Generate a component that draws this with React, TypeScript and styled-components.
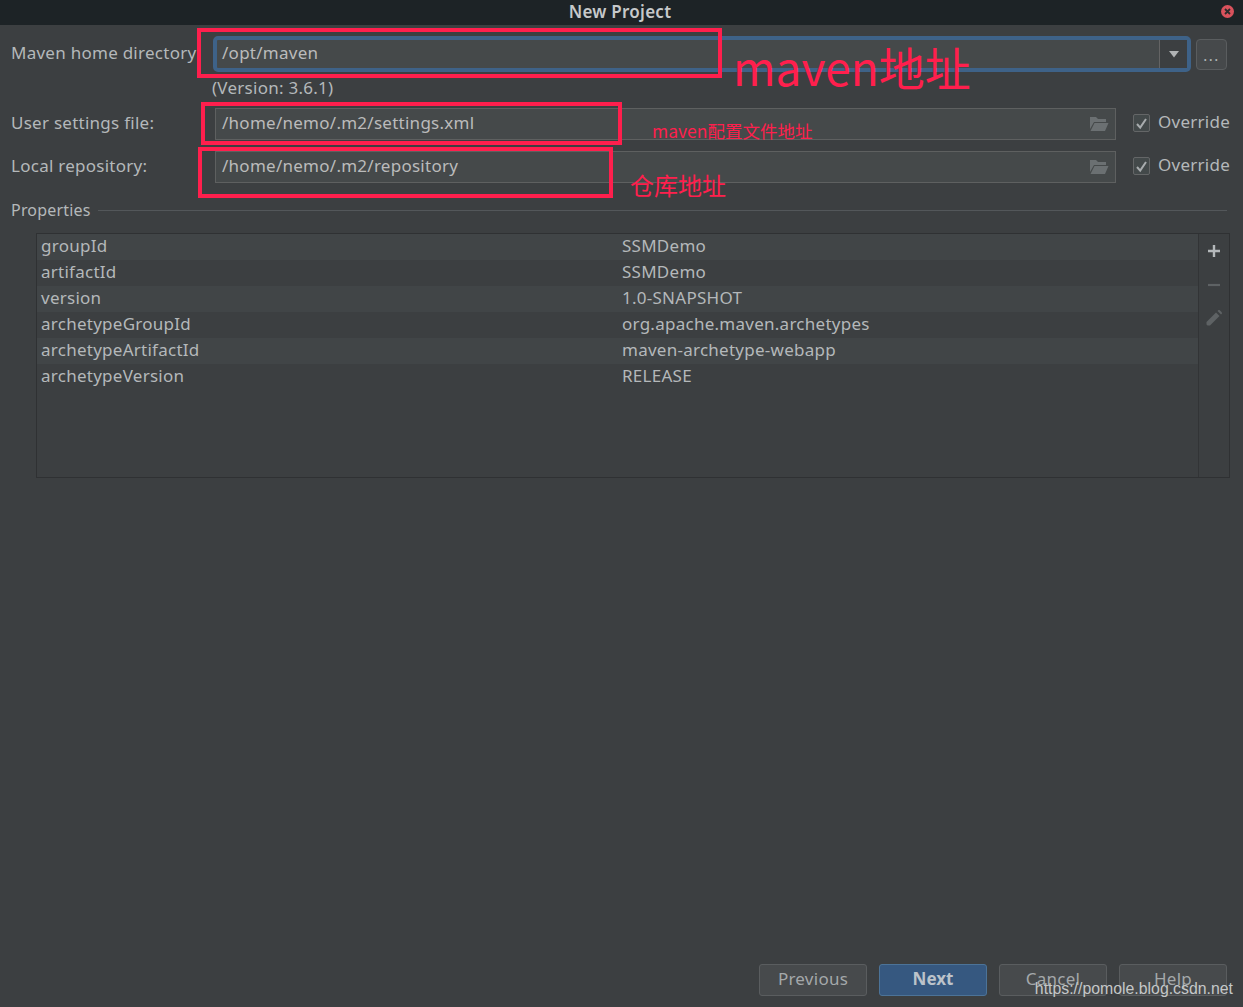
import React from "react";
import styled, { createGlobalStyle } from "styled-components";

const Global = createGlobalStyle`
  html, body { margin: 0; padding: 0; background: #3c3f41; }
  * { box-sizing: border-box; }
`;

const Page = styled.div`
  position: relative;
  width: 1243px;
  height: 1007px;
  overflow: hidden;
  display: flex;
  flex-direction: column;
  background: #3c3f41;
  color: #b4b8ba;
  font-family: "Noto Sans", sans-serif;
  font-size: 17px;
  letter-spacing: 0.26px;
`;

const TitleBar = styled.div`
  height: 25px;
  flex: none;
  position: relative;
  display: flex;
  align-items: center;
  justify-content: center;
  background: #1d2326;
  color: #c6c9ca;
  font-size: 17px;
  font-weight: 600;
  padding: 0 3px 2px 0;
`;

const CloseDot = styled.svg`
  position: absolute;
  right: 8px;
  top: 4px;
`;

const Form = styled.div`
  padding: 11px 13px 0 11px;
  display: flex;
  flex-direction: column;
`;

const Row = styled.div<{ $mt?: number }>`
  display: flex;
  align-items: center;
  margin-top: ${(p) => p.$mt ?? 0}px;
`;

const Label = styled.div<{ $w: number }>`
  width: ${(p) => p.$w}px;
  flex: none;
  white-space: nowrap;
  padding-bottom: 4px;
`;

const Combo = styled.div`
  width: 978px;
  height: 36px;
  flex: none;
  display: flex;
  background: #45494a;
  border: 4px solid #3e6288;
  border-radius: 5px;
`;

const ComboText = styled.div`
  flex: 1;
  padding-left: 5px;
  color: #bbbbbb;
  line-height: 26px;
`;

const ComboArrow = styled.div`
  width: 28px;
  display: flex;
  align-items: center;
  justify-content: center;
  background: #3c3f41;
  border-left: 1px solid #646464;
`;

const MoreButton = styled.div`
  width: 31px;
  height: 31px;
  flex: none;
  margin-left: 5px;
  display: flex;
  align-items: center;
  justify-content: center;
  background: #46494b;
  border: 1px solid #5a5d5f;
  border-radius: 4px;
  color: #b4b8ba;
  font-size: 15px;
  letter-spacing: 1.4px;
  padding-top: 2px;
`;

const Version = styled.div`
  margin: 6px 0 0 201px;
  line-height: 20px;
  height: 20px;
  color: #b4b8ba;
`;

const Field = styled.div`
  width: 901px;
  height: 32px;
  flex: none;
  display: flex;
  align-items: center;
  justify-content: space-between;
  padding: 0 6px;
  background: #45494a;
  border: 1px solid #5e6060;
  color: #bbbbbb;
`;

const FieldText = styled.span`
  padding-bottom: 4px;
`;

const CheckWrap = styled.label`
  display: flex;
  align-items: center;
  margin-left: 17px;
  gap: 8px;
  white-space: nowrap;
`;

const CheckLabel = styled.span`
  padding-bottom: 6px;
`;

const CheckBox = styled.span`
  width: 17px;
  height: 18px;
  margin-bottom: 2px;
  display: flex;
  align-items: center;
  justify-content: center;
  background: #43494a;
  border: 1px solid #646667;
  border-radius: 2px;
`;

const GroupHead = styled.div`
  display: flex;
  align-items: center;
  gap: 7px;
  margin-top: 16px;
  height: 22px;
  font-size: 16px;
  letter-spacing: 0.2px;
`;

const GroupLine = styled.div`
  flex: 1;
  height: 1px;
  background: #53575a;
  margin-right: 3px;
`;

const Table = styled.div`
  margin: 12px 0 0 25px;
  width: 1194px;
  height: 245px;
  flex: none;
  display: flex;
  border: 1px solid #2f3133;
`;

const TableBody = styled.div`
  flex: 1;
  display: flex;
  flex-direction: column;
`;

const TableRow = styled.div<{ $alt: boolean }>`
  height: 26px;
  flex: none;
  display: grid;
  grid-template-columns: 581px 1fr;
  align-items: center;
  padding: 0 0 3px 4px;
  background: ${(p) => (p.$alt ? "#414547" : "#3c3f41")};
`;

const ToolStrip = styled.div`
  width: 31px;
  flex: none;
  border-left: 1px solid #323436;
  display: flex;
  flex-direction: column;
  align-items: center;
  padding-top: 10px;
`;

const ToolIcon = styled.svg<{ $mt?: number }>`
  display: block;
  flex: none;
  margin-top: ${(p) => p.$mt ?? 0}px;
`;

const Footer = styled.div`
  margin-top: auto;
  display: flex;
  justify-content: flex-end;
  gap: 12px;
  padding: 0 16px 11px 0;
`;

const Button = styled.div<{ $primary?: boolean }>`
  width: 108px;
  height: 32px;
  display: flex;
  align-items: center;
  justify-content: center;
  padding-bottom: 4px;
  border-radius: 3px;
  border: 1px solid ${(p) => (p.$primary ? "#4c7398" : "#5a5d5f")};
  background: ${(p) => (p.$primary ? "#365880" : "#474a4c")};
  color: ${(p) => (p.$primary ? "#bcc3ca" : "#a4a8aa")};
  font-weight: ${(p) => (p.$primary ? 700 : 400)};
  letter-spacing: ${(p) => (p.$primary ? "0" : "0.26px")};
`;

const Mark = styled.div<{ $x: number; $y: number; $w: number; $h: number }>`
  position: absolute;
  left: ${(p) => p.$x}px;
  top: ${(p) => p.$y}px;
  width: ${(p) => p.$w}px;
  height: ${(p) => p.$h}px;
  border: 4px solid #ff1f4d;
`;

const Note = styled.div<{ $x: number; $y: number; $size: number }>`
  position: absolute;
  left: ${(p) => p.$x}px;
  top: ${(p) => p.$y}px;
  font-family: "Noto Sans CJK SC", sans-serif;
  font-size: ${(p) => p.$size}px;
  letter-spacing: 0;
  line-height: 1;
  color: #ff1f4d;
  white-space: nowrap;
`;

const Watermark = styled.div`
  position: absolute;
  right: 10px;
  top: 979px;
  font-family: "Liberation Sans", sans-serif;
  font-size: 15.85px;
  letter-spacing: 0;
  line-height: 20px;
  color: #c4c7c8;
  white-space: nowrap;
`;

const Folder = () => (
  <svg width="20" height="16" viewBox="0 0 20 16">
    <path d="M1 1h6l2 2h8v3H5L1 13z" fill="#6b7072" />
    <path d="M5.5 7H19.5L16 15H1.5z" fill="#6b7072" />
  </svg>
);

const Check = () => (
  <svg width="13" height="13" viewBox="0 0 13 13">
    <path d="M2 7l3.2 3.6L11 2" fill="none" stroke="#a8acae" strokeWidth="2" />
  </svg>
);

const rows = [
  ["groupId", "SSMDemo"],
  ["artifactId", "SSMDemo"],
  ["version", "1.0-SNAPSHOT"],
  ["archetypeGroupId", "org.apache.maven.archetypes"],
  ["archetypeArtifactId", "maven-archetype-webapp"],
  ["archetypeVersion", "RELEASE"],
];

export default function App() {
  return (
    <Page>
      <Global />
      <TitleBar>
        New Project
        <CloseDot width="15" height="15" viewBox="0 0 15 15">
          <circle cx="7.5" cy="7.5" r="6.5" fill="#d9525c" />
          <path d="M5 5l5 5M10 5l-5 5" stroke="#2b2b2b" strokeWidth="1.8" />
        </CloseDot>
      </TitleBar>
      <Form>
        <Row>
          <Label $w={202}>Maven home directory</Label>
          <Combo>
            <ComboText>/opt/maven</ComboText>
            <ComboArrow>
              <svg width="12" height="7" viewBox="0 0 12 7">
                <path d="M1 0h10L6 6.5z" fill="#b0b3b5" />
              </svg>
            </ComboArrow>
          </Combo>
          <MoreButton>...</MoreButton>
        </Row>
        <Version>(Version: 3.6.1)</Version>
        <Row $mt={10}>
          <Label $w={204}>User settings file:</Label>
          <Field>
            <FieldText>/home/nemo/.m2/settings.xml</FieldText>
            <Folder />
          </Field>
          <CheckWrap>
            <CheckBox>
              <Check />
            </CheckBox>
            <CheckLabel>Override</CheckLabel>
          </CheckWrap>
        </Row>
        <Row $mt={11}>
          <Label $w={204}>Local repository:</Label>
          <Field>
            <FieldText>/home/nemo/.m2/repository</FieldText>
            <Folder />
          </Field>
          <CheckWrap>
            <CheckBox>
              <Check />
            </CheckBox>
            <CheckLabel>Override</CheckLabel>
          </CheckWrap>
        </Row>
        <GroupHead>
          Properties
          <GroupLine />
        </GroupHead>
        <Table>
          <TableBody>
            {rows.map(([k, v], i) => (
              <TableRow key={k} $alt={i % 2 === 0}>
                <span>{k}</span>
                <span>{v}</span>
              </TableRow>
            ))}
          </TableBody>
          <ToolStrip>
            <ToolIcon width="14" height="14" viewBox="0 0 14 14">
              <path d="M7 1v12M1 7h12" stroke="#b4b8ba" strokeWidth="2.4" />
            </ToolIcon>
            <ToolIcon width="14" height="14" viewBox="0 0 14 14" $mt={20}>
              <path d="M1 7h12" stroke="#5e6264" strokeWidth="2.2" />
            </ToolIcon>
            <ToolIcon width="18" height="18" viewBox="0 0 18 18" $mt={17}>
              <path d="M1.5 13L11 3.5l3.5 3.5L5 16.5H2.5l-1-1z" fill="#5e6264" />
              <path d="M12.5 2l1-1h1l2.5 2.5v1l-1 1z" fill="#5e6264" />
            </ToolIcon>
          </ToolStrip>
        </Table>
      </Form>
      <Footer>
        <Button>Previous</Button>
        <Button $primary>Next</Button>
        <Button>Cancel</Button>
        <Button>Help</Button>
      </Footer>
      <Mark $x={197} $y={28} $w={525} $h={50} />
      <Mark $x={201} $y={102} $w={421} $h={43} />
      <Mark $x={198} $y={147} $w={415} $h={51} />
      <Note $x={733} $y={43} $size={46}>maven地址</Note>
      <Note $x={652} $y={122} $size={17.5}>maven配置文件地址</Note>
      <Note $x={630} $y={173} $size={24}>仓库地址</Note>
      <Watermark>https://pomole.blog.csdn.net</Watermark>
    </Page>
  );
}
